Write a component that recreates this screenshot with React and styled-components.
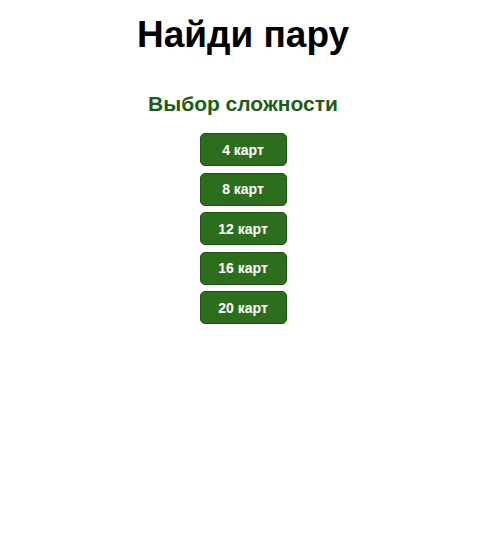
import React from "react";
import styled, { createGlobalStyle } from "styled-components";

const GlobalStyle = createGlobalStyle`
  body {
    margin: 0;
    background: #fff;
    font-family: "Liberation Sans", Arial, sans-serif;
  }
`;

const Page = styled.div`
  display: flex;
  flex-direction: column;
  align-items: center;
  padding-top: 13px;
`;

const Title = styled.h1`
  margin: 0;
  font-size: 37px;
  font-weight: 700;
  color: #000;
  line-height: 44px;
`;

const Subtitle = styled.h2`
  margin: 34px 0 0;
  font-size: 21px;
  font-weight: 700;
  color: #1b5e16;
  line-height: 26px;
`;

const Levels = styled.div`
  display: flex;
  flex-direction: column;
  align-items: center;
  gap: 6.5px;
  margin-top: 16px;
`;

const LevelButton = styled.button`
  width: 87px;
  height: 33px;
  border: 1px solid #1f5412;
  border-radius: 5px;
  background: #2d6e1d;
  color: #fff;
  font-family: "Liberation Sans", Arial, sans-serif;
  font-size: 14px;
  font-weight: 700;
  cursor: pointer;
`;

const levels = [4, 8, 12, 16, 20];

export default function App() {
  return (
    <>
      <GlobalStyle />
      <Page>
        <Title>Найди пару</Title>
        <Subtitle>Выбор сложности</Subtitle>
        <Levels>
          {levels.map((n) => (
            <LevelButton key={n}>{n} карт</LevelButton>
          ))}
        </Levels>
      </Page>
    </>
  );
}
